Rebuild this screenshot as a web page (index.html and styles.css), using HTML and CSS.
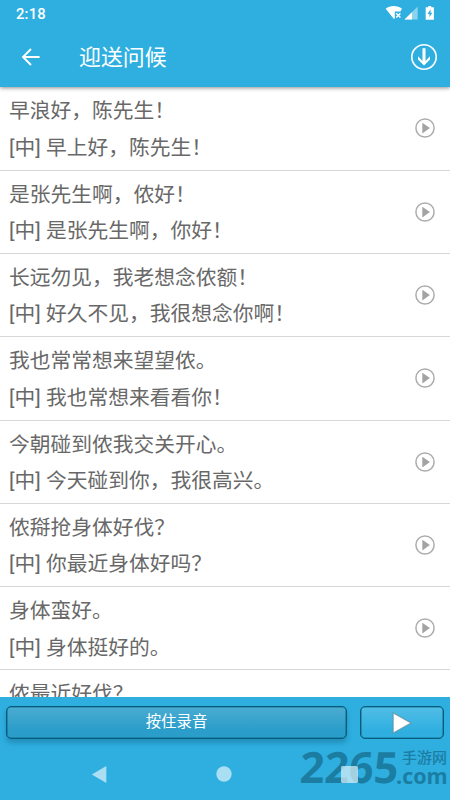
FILE: index.html
```
<!DOCTYPE html>
<html lang="zh-CN">
<head>
<meta charset="utf-8">
<title>迎送问候</title>
<link rel="stylesheet" href="styles.css">
</head>
<body>
<svg width="0" height="0" class="defs">
  <symbol id="play" viewBox="0 0 20 20"><circle cx="10" cy="10" r="9.1" fill="none" stroke="#adadad" stroke-width="1.500"/><path d="M7.300 4.700v10.800l7.600-5.400z" fill="#a3a3a3"/></symbol>
</svg>
<div class="screen">
  <header class="top">
    <div class="status">
      <span class="clock">2:18</span>
      <svg width="50" height="16" viewBox="0 0 50 16" fill="#fff">
        <path d="M0.700 3.800C5 .1 12.400 .1 17 3.800L15.300 6.400H9.800V13.300L8.900 14z"/>
        <path d="M11.200 8.300l4.200 4.200M15.400 8.300L11.200 12.500" stroke="#fff" stroke-width="1.400" fill="none"/>
        <path d="M32.700 1.500V14.500H19.500z" opacity=".45"/>
        <path d="M27 7.200V14.500H19.500z"/>
        <path d="M43.200 1h3v1.300h2.700V14.800h-8.200V2.300h2.500z"/>
        <path d="M45.600 4.300L42.600 9h1.900v3.300L47.300 7.800h-1.700z" fill="#2eafe0"/>
      </svg>
    </div>
    <div class="bar">
      <svg width="20" height="18" viewBox="0 0 20 18" fill="none" stroke="#fff" stroke-width="1.900"><path d="M18.600 9H2.400M10 1L2 9l8 8"/></svg>
      <h1>迎送问候</h1>
      <svg width="28" height="28" viewBox="0 0 28 28"><circle cx="14" cy="14" r="12.200" fill="none" stroke="#fff" stroke-width="1.600"/><path d="M12.500 5.300h3V18l4.500-4.800V16.500L14 22.500l-6-6V13.200L12.500 18z" fill="#fff"/></svg>
    </div>
  </header>
  <main class="list">
    <section class="row"><div><p>早浪好，陈先生！</p><p>[中] 早上好，陈先生！</p></div><svg><use href="#play"/></svg></section>
    <section class="row"><div><p>是张先生啊，侬好！</p><p>[中] 是张先生啊，你好！</p></div><svg><use href="#play"/></svg></section>
    <section class="row"><div><p>长远勿见，我老想念侬额！</p><p>[中] 好久不见，我很想念你啊！</p></div><svg><use href="#play"/></svg></section>
    <section class="row"><div><p>我也常常想来望望侬。</p><p>[中] 我也常想来看看你！</p></div><svg><use href="#play"/></svg></section>
    <section class="row"><div><p>今朝碰到侬我交关开心。</p><p>[中] 今天碰到你，我很高兴。</p></div><svg><use href="#play"/></svg></section>
    <section class="row"><div><p>侬搿抢身体好伐？</p><p>[中] 你最近身体好吗？</p></div><svg><use href="#play"/></svg></section>
    <section class="row"><div><p>身体蛮好。</p><p>[中] 身体挺好的。</p></div><svg><use href="#play"/></svg></section>
    <section class="row"><div><p>侬最近好伐？</p></div></section>
  </main>
  <footer class="bottom">
    <div class="controls">
      <button class="record">按住录音</button>
      <button class="playback"><svg width="22" height="24" viewBox="0 0 22 24"><path d="M2.200 2v20L20 12z" fill="#fff" stroke="#65868f" stroke-opacity=".65" stroke-width="1.200"/></svg></button>
    </div>
    <div class="watermark"><span class="num">2265</span><span class="side"><span class="cn">手游网</span><span class="com">.com</span></span></div>
    <nav class="nav">
      <svg width="16" height="19" viewBox="0 0 16 19"><path d="M15.300 1v17L.8 9.500z"/></svg>
      <svg width="16" height="16" viewBox="0 0 16 16"><circle cx="8" cy="8" r="7.700"/></svg>
      <svg width="17" height="17" viewBox="0 0 17 17"><rect width="17" height="17" rx="1.500"/></svg>
    </nav>
  </footer>
</div>
</body>
</html>
```
FILE: styles.css
```
* { box-sizing: border-box; }
body { margin: 0; font-family: Roboto, "Noto Sans CJK SC", sans-serif; }
.defs { position: absolute; }
.screen { width: 450px; height: 800px; display: flex; flex-direction: column; overflow: hidden; background: #fff; }
.top { height: 87px; flex: none; background: #2eafe0; box-shadow: 0 1px 4px rgba(0,0,0,.45); z-index: 1; color: #fff; }
.status { height: 27px; display: flex; justify-content: space-between; padding: 5px 15px 0 16px; }
.clock { font-size: 14.8px; font-weight: 500; line-height: 18px; letter-spacing: .2px; }
.bar { height: 60px; display: flex; align-items: center; padding: 0 12px 0 21px; }
h1 { margin: 2px auto 0 38px; font-size: 21.9px; font-weight: 400; line-height: 30px; }
.list { flex: 1; min-height: 0; overflow: hidden; padding-top: .4px; }
.row { height: 83.3px; display: flex; justify-content: space-between; align-items: flex-start; padding: 6px 15px 0 9px; border-bottom: 1px solid #d8d8d8; color: #686868; }
.row p { margin: 0; font-size: 20.75px; line-height: 36.5px; white-space: nowrap; }
.row svg { width: 20px; height: 20px; margin-top: 25px; }
.bottom { position: relative; height: 103px; flex: none; background: #2eafe0; }
.controls { display: flex; gap: 13px; padding: 9px 6px 0 6px; }
button { height: 33px; padding: 0; border: 1px solid #065c7a; border-radius: 5px; color: #fff; font-family: inherit; font-size: 15.4px; line-height: 31px; }
.record { width: 341px; background: linear-gradient(#4bacd1, #2a9dca 75%); box-shadow: 0 4px 5px rgba(0,60,90,.28), inset 0 0 0 .6px rgba(6,92,122,.7); }
.playback { width: 84px; display: flex; justify-content: center; align-items: center; background: linear-gradient(#51bde6, #2eafe0 80%); box-shadow: inset 0 0 0 .6px rgba(6,92,122,.7); }
.nav { position: relative; display: flex; align-items: center; justify-content: space-between; height: 46px; padding: 24px 92px 0 91px; fill: rgba(225,243,251,.69); }
.watermark { position: absolute; left: 300px; top: 52px; display: flex; color: #166b8c; opacity: .72; }
.num { width: 100px; font: 700 43px/36px "Open Sans", sans-serif; transform: skewX(-3deg); }
.side { display: flex; flex-direction: column; margin-left: -4px; padding-top: 2px; }
.cn { padding-left: 6px; font-size: 15px; line-height: 14px; font-weight: 500; white-space: nowrap; }
.com { margin-top: 3px; font: 700 21.5px/16px "Open Sans", sans-serif; }
```
